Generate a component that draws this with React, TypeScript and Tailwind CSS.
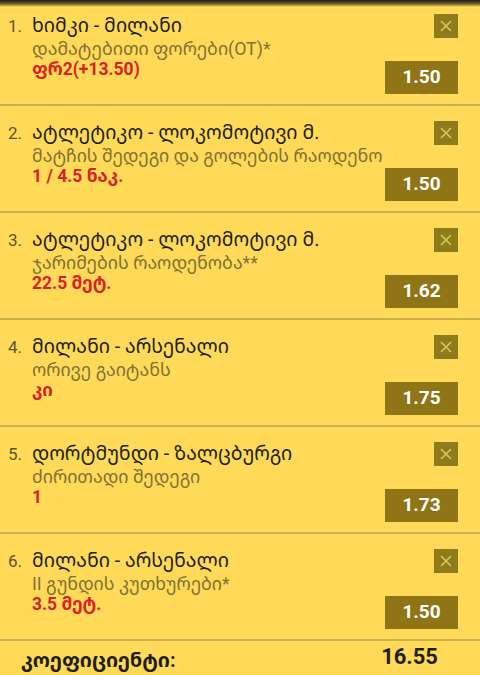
import React from "react";

type Bet = { n: number; title: string; market: string; pick: string; odds: string };

const bets: Bet[] = [
  { n: 1, title: "ხიმკი - მილანი", market: "დამატებითი ფორები(OT)*", pick: "ფრ2(+13.50)", odds: "1.50" },
  { n: 2, title: "ატლეტიკო - ლოკომოტივი მ.", market: "მატჩის შედეგი და გოლების რაოდენო", pick: "1 / 4.5 ნაკ.", odds: "1.50" },
  { n: 3, title: "ატლეტიკო - ლოკომოტივი მ.", market: "ჯარიმების რაოდენობა**", pick: "22.5 მეტ.", odds: "1.62" },
  { n: 4, title: "მილანი - არსენალი", market: "ორივე გაიტანს", pick: "კი", odds: "1.75" },
  { n: 5, title: "დორტმუნდი - ზალცბურგი", market: "ძირითადი შედეგი", pick: "1", odds: "1.73" },
  { n: 6, title: "მილანი - არსენალი", market: "II გუნდის კუთხურები*", pick: "3.5 მეტ.", odds: "1.50" },
];

function Row({ b, first }: { b: Bet; first: boolean }) {
  return (
    <div
      className={`flex justify-between border-b-2 border-[#c9b24c] pl-[8px] pr-[22px] pb-[10px] ${
        first ? "h-[106px] pt-[14px]" : "h-[107px] pt-[15px]"
      }`}
    >
      <div className="flex min-w-0">
        <div className="w-[24px] shrink-0 text-[17px] leading-[24px] text-[#5c5430]">{b.n}.</div>
        <div className="flex flex-col">
          <div className="text-[19.5px] leading-[24px] text-[#1f1f1f] whitespace-nowrap">{b.title}</div>
          <div className="text-[17.75px] leading-[22px] text-[#807135] whitespace-nowrap">{b.market}</div>
          <div className="-mt-[1px] text-[17.5px] leading-[20px] font-bold text-[#d6242a] whitespace-nowrap">{b.pick}</div>
        </div>
      </div>
      <div className="flex shrink-0 flex-col items-end justify-between">
        <div className="flex h-[24px] w-[24px] items-center justify-center bg-[#8e7b1a]">
          <svg width="14" height="14" viewBox="0 0 14 14">
            <path d="M2 2 L12 12 M12 2 L2 12" stroke="#d9c45e" strokeWidth="1.6" />
          </svg>
        </div>
        <div className="flex h-[33px] w-[73px] items-center justify-center bg-[#8f7515] text-[19px] font-bold text-white">
          {b.odds}
        </div>
      </div>
    </div>
  );
}

export default function App() {
  return (
    <div className="relative h-[675px] w-[480px] overflow-hidden bg-[#ffda58] font-['Roboto','Noto_Sans_Georgian','DejaVu_Sans',sans-serif]">
      <div className="pointer-events-none absolute left-0 right-0 top-0 h-[7px] bg-gradient-to-b from-[#1e1e1e] via-[#6b5a22] to-transparent" />
      {bets.map((b, i) => (
        <Row key={i} b={b} first={i === 0} />
      ))}
      <div className="flex h-[34px] items-center justify-between pl-[21px] pr-[42px]">
        <div className="pt-[4px] text-[20px] font-bold text-[#1f1f1f]">კოეფიციენტი:</div>
        <div className="-mt-[4px] text-[22px] font-bold text-[#1f1f1f]">16.55</div>
      </div>
    </div>
  );
}
